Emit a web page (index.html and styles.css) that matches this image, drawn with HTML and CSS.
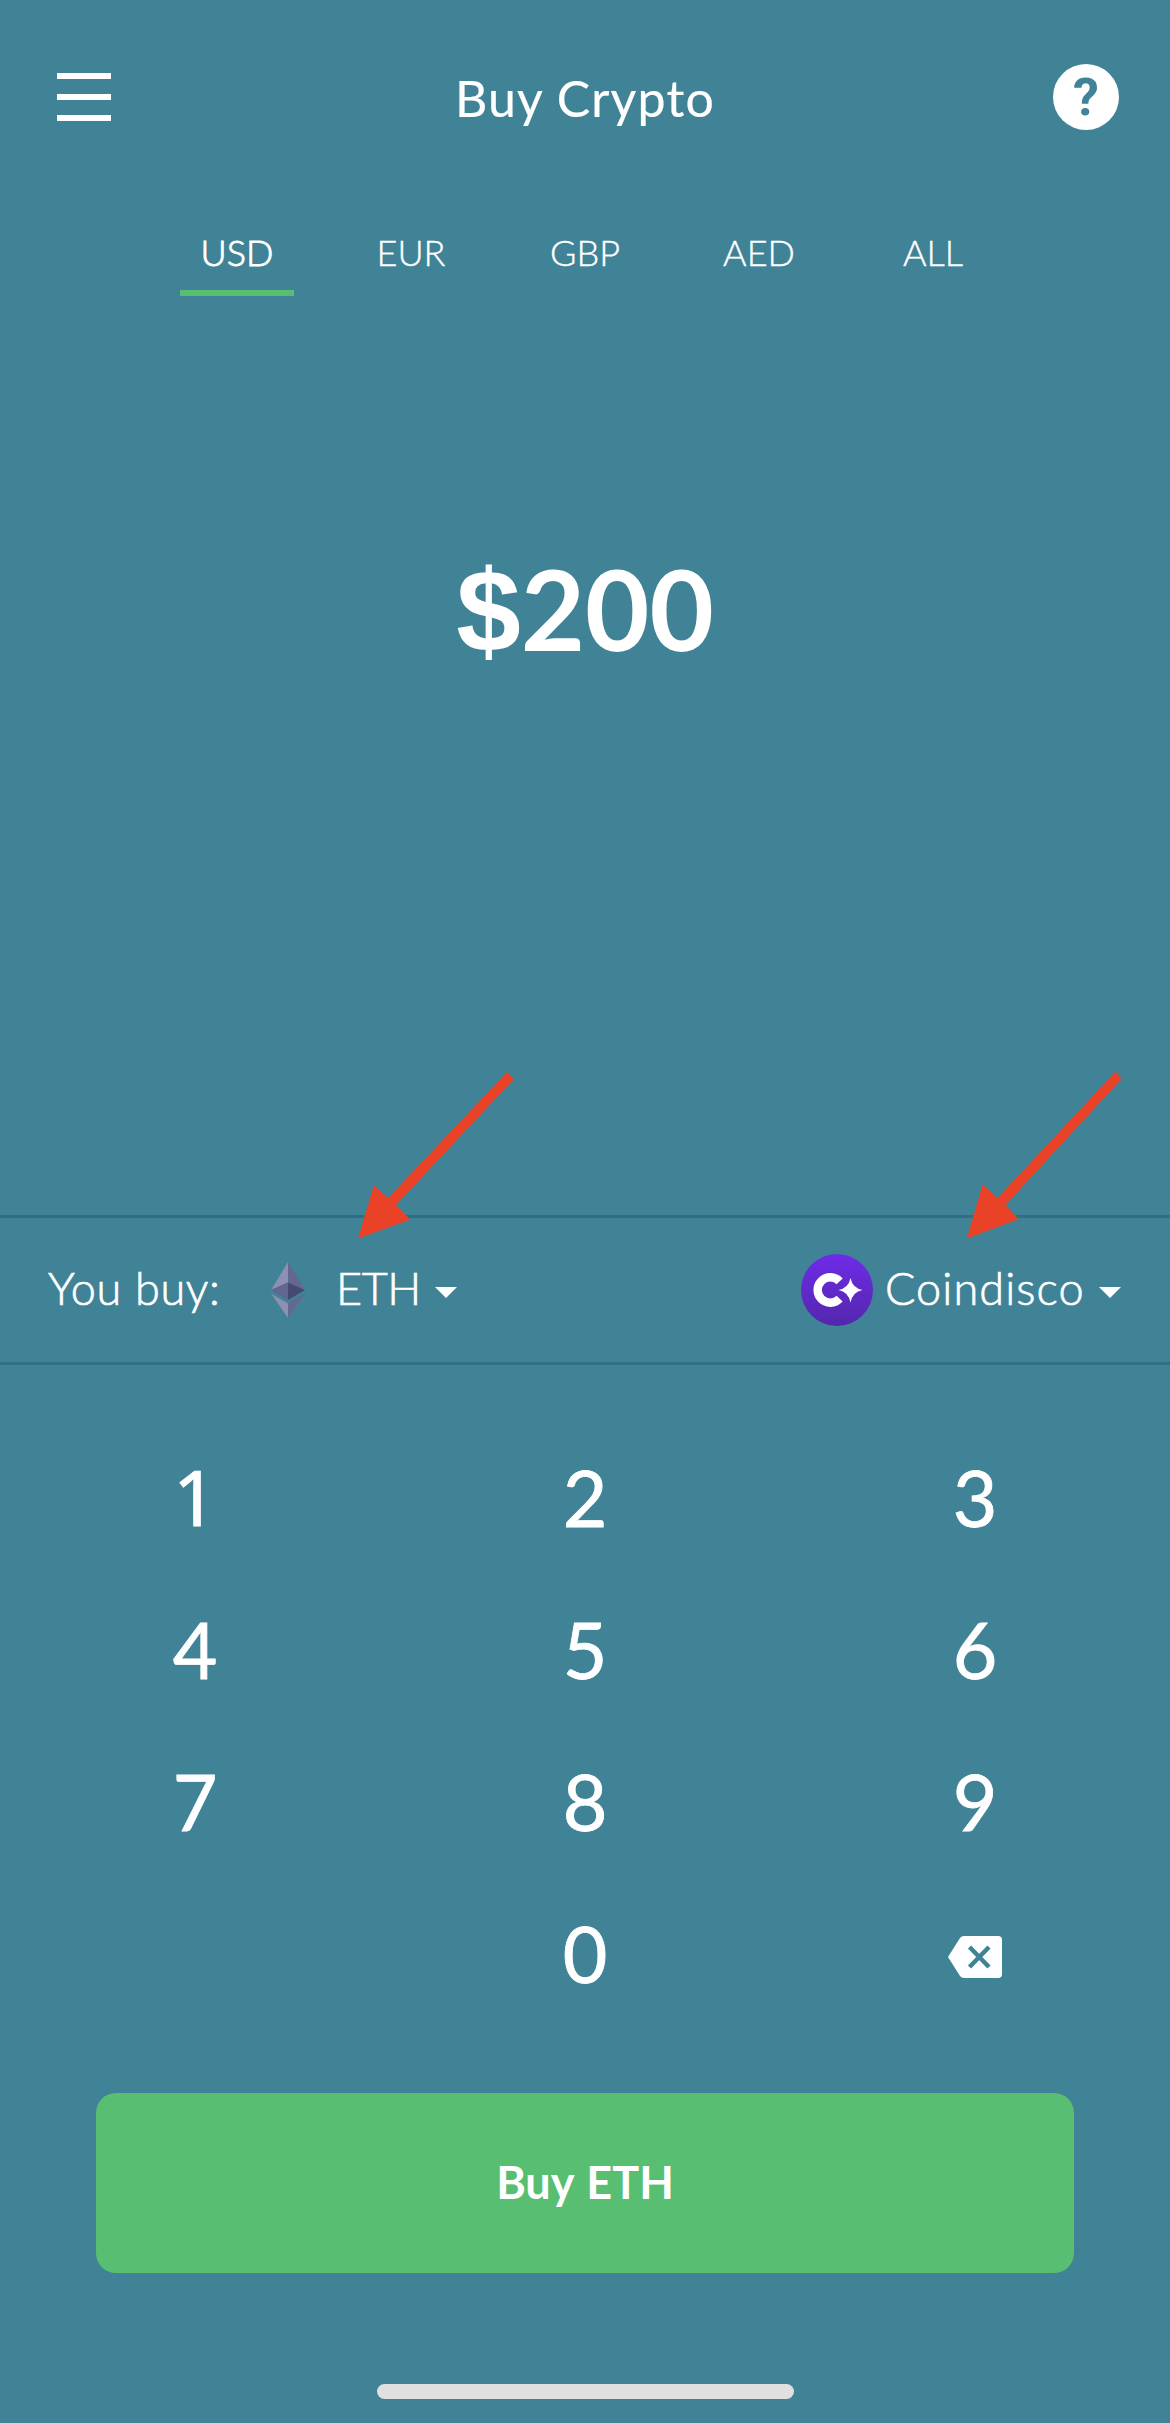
FILE: index.html
```html
<!DOCTYPE html>
<html lang="en">
<head>
<meta charset="utf-8">
<title>Buy Crypto</title>
<link rel="stylesheet" href="styles.css">
</head>
<body>
<main class="screen">
  <header class="header">
    <button class="menu" aria-label="Menu"><span></span><span></span><span></span></button>
    <h1 class="title">Buy Crypto</h1>
    <button class="help" aria-label="Help">?</button>
  </header>

  <nav class="tabs">
    <a class="tab tab-active">USD</a>
    <a class="tab">EUR</a>
    <a class="tab">GBP</a>
    <a class="tab">AED</a>
    <a class="tab">ALL</a>
  </nav>

  <section class="amount"><span class="amount-value"><span class="currency">$</span>200</span></section>

  <section class="selection">
    <span class="label buy-label">You buy:</span>
    <svg class="eth" viewBox="0 0 34 56" width="34" height="56">
      <path fill="#8c90b2" d="M17 0 0 28 17 20.500Z"/>
      <path fill="#64688f" d="M17 0 34 28 17 20.500Z"/>
      <path fill="#62658f" d="M0 28 17 20.500V38Z"/>
      <path fill="#454a75" d="M34 28 17 20.500V38Z"/>
      <path fill="#8c90b2" d="M0 31.500 17 41.500V56Z"/>
      <path fill="#64688f" d="M34 31.500 17 41.500V56Z"/>
    </svg>
    <span class="label coin">ETH</span>
    <svg class="caret" viewBox="0 0 22 11" width="22" height="11"><path d="M0 0H22L11 11Z"/></svg>
    <svg class="provider-logo" viewBox="0 0 72 72" width="72" height="72">
      <defs><linearGradient id="violet" x1="0" y1="0" x2="0" y2="1"><stop offset="0" stop-color="#6f2be8"/><stop offset="1" stop-color="#5327ad"/></linearGradient></defs>
      <circle cx="36" cy="36" r="36" fill="url(#violet)"/>
      <path d="M38.600 27.300A12.700 12.700 0 1 0 38.600 44.700" fill="none" stroke="#fff" stroke-width="8.400"/>
      <path d="M49.500 24Q51.500 34 61.500 36 51.500 38 49.500 48.500 47.500 38 37.500 36 47.500 34 49.500 24Z" fill="#fff"/>
    </svg>
    <span class="label provider">Coindisco</span>
    <svg class="caret" viewBox="0 0 22 11" width="22" height="11"><path d="M0 0H22L11 11Z"/></svg>
    <svg class="pointer pointer-coin" viewBox="0 0 157 168" width="157" height="168"><path d="M0 167.500 16 114 30 127 149 1 156 8 38 134 52 148.500Z"/></svg>
    <svg class="pointer pointer-provider" viewBox="0 0 157 168" width="157" height="168"><path d="M0 167.500 15.500 113.500 30.500 127 148.500 .500 155 7.500 38.500 134 51.500 148Z"/></svg>
  </section>

  <section class="keypad">
    <button class="key key-one">1</button><button class="key">2</button><button class="key">3</button>
    <button class="key">4</button><button class="key">5</button><button class="key">6</button>
    <button class="key">7</button><button class="key">8</button><button class="key">9</button>
    <span></span><button class="key">0</button>
    <button class="key" aria-label="Delete">
      <svg class="backspace" viewBox="0 0 54 42" width="54" height="42">
        <path fill="#fff" d="M16 0H50Q54 0 54 4V38Q54 42 50 42H16Q13.500 42 12 40L0 21 12 2Q13.500 0 16 0Z"/>
        <path fill="none" stroke="#408397" stroke-width="4.500" d="M21.500 11 41 31M41 11 21.500 31"/>
      </svg>
    </button>
  </section>

  <button class="buy"><span class="buy-text">Buy ETH</span></button>
  <div class="home-bar"></div>
</main>
</body>
</html>
```
FILE: styles.css
```css
* { box-sizing: border-box; }
body { margin: 0; background: #408397; color: #fff; font-family: Lato, "Open Sans", sans-serif; }
button { border: 0; padding: 0; background: none; color: inherit; font: inherit; }
svg { display: block; flex: none; }

.screen { width: 1170px; height: 2423px; display: flex; flex-direction: column; overflow: hidden; }

.header { display: flex; justify-content: space-between; align-items: center; height: 66px; margin: 64px 51px 0 57px; }
.menu { display: flex; flex-direction: column; gap: 15px; width: 60px; }
.menu span { width: 54px; height: 6px; background: #fff; }
.title { margin: 0; padding-top: 2px; font-size: 50px; line-height: 66px; font-weight: 400; letter-spacing: 1.2px; -webkit-text-stroke: .2px #fff; }
.help { width: 66px; height: 66px; border-radius: 50%; background: #fff; color: #408397; font: 700 52px/68px Roboto, sans-serif; text-align: center; }

.tabs { display: grid; grid-template-columns: repeat(5, 114px); column-gap: 60px; justify-content: center; margin: 91px 0 0; }
.tab { height: 75px; border-bottom: 6px solid transparent; font-size: 36px; line-height: 62px; font-weight: 300; text-align: center; -webkit-text-stroke: .4px #fff; }
.tab-active { border-color: #58be72; -webkit-text-stroke: .9px #fff; }

.amount { height: 919px; padding-top: 242px; text-align: center; }
.amount-value { font-size: 111px; line-height: 140px; font-weight: 700; }
.currency { font-family: "Liberation Sans", Arial, sans-serif; font-size: 116px; line-height: 1; }

.selection { position: relative; display: flex; align-items: center; height: 150px; padding: 0 49px 0 48px; border-top: 3px solid #2f7183; border-bottom: 3px solid #2f7183; }
.label { font-size: 45px; line-height: 54px; font-weight: 300; padding-bottom: 5px; white-space: nowrap; -webkit-text-stroke: .7px #fff; }
.buy-label { width: 223px; letter-spacing: .7px; }
.coin { width: 99px; margin-left: 31px; letter-spacing: -.4px; }
.caret { fill: #fff; margin-top: 5px; }
.provider-logo { margin-left: auto; }
.provider { width: 214px; margin-left: 12px; letter-spacing: 1.1px; }
.pointer { position: absolute; fill: #ea4227; top: -147px; }
.pointer-coin { left: 358px; }
.pointer-provider { left: 967px; }

.keypad { display: grid; grid-template-columns: repeat(3, 390px); grid-auto-rows: 152px; margin-top: 55px; }
.key { font-size: 77px; line-height: 154px; font-weight: 400; text-align: center; -webkit-text-stroke: .8px #fff; }
.key-one { font-family: "Noto Sans", sans-serif; }
.backspace { margin: 10px auto 0; -webkit-text-stroke: 0; }

.buy { height: 180px; margin: 65px 96px 0; border-radius: 20px; background: #58be72; font-size: 45px; font-weight: 700; word-spacing: 2px; }
.buy-text { display: block; padding-bottom: 3px; }
.home-bar { width: 417px; height: 15px; margin: 111px auto 0; border-radius: 8px; background: #e0e0e0; }
```
